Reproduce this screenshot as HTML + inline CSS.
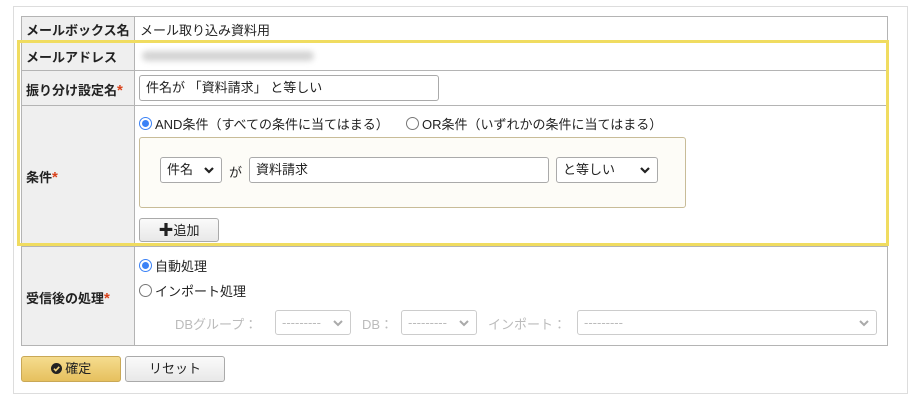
<!DOCTYPE html>
<html><head><meta charset="utf-8"><style>
*{box-sizing:border-box;margin:0;padding:0}
body{width:917px;height:400px;background:#fff;position:relative;font-family:"Liberation Sans","Noto Sans CJK JP",sans-serif;font-size:13px;color:#222;overflow:hidden}
.a{position:absolute}
.line{position:absolute;background:#b4b4b4}
.lbl{position:absolute;left:26px;font-weight:bold;font-size:13px}
.req{color:#d9421b;font-size:15px}
.inp{position:absolute;border:1px solid #aaa;border-radius:3px;background:#fff;padding-left:6px;line-height:23px}
.sel{position:absolute;border:1px solid #aaa;border-radius:3px;background:#fff;padding-left:6px;line-height:23px}
.chev{position:absolute;right:6px;top:8px;width:12px;height:8px}
.radio{position:absolute;width:13px;height:13px;border-radius:50%;border:1px solid #777;background:#fff}
.radio.on{border:1px solid #3b82f6}
.radio.on::after{content:"";position:absolute;left:2px;top:2px;width:7px;height:7px;border-radius:50%;background:#3b82f6}
.dis{color:#bbb}
.btn{position:absolute;border:1px solid #aaa;border-radius:3px;background:linear-gradient(#fafafa,#e8e8e8);text-align:center;line-height:23px}
</style></head><body>
<div class="a" style="left:13px;top:6px;width:895px;height:388px;border:1px solid #ddd"></div>
<div class="a" style="left:21px;top:16px;width:114px;height:330px;background:#efefef"></div>
<div class="a" style="left:21px;top:16px;width:867px;height:330px;border:1px solid #b4b4b4"></div>
<div class="line" style="left:134px;top:16px;width:1px;height:330px"></div>
<div class="line" style="left:21px;top:40px;width:867px;height:1px"></div>
<div class="line" style="left:21px;top:70px;width:867px;height:1px"></div>
<div class="line" style="left:21px;top:105px;width:867px;height:1px"></div>
<div class="line" style="left:21px;top:246px;width:867px;height:1px"></div>

<div class="lbl" style="top:20px">メールボックス名</div>
<div class="a" style="left:140px;top:20px">メール取り込み資料用</div>
<div class="lbl" style="top:47px">メールアドレス</div>
<div class="a" style="left:142px;top:51px;width:172px;height:10px;background:#d4d4d4;border-radius:5px;filter:blur(3px)"></div>
<div class="lbl" style="top:80px">振り分け設定名<span class="req">*</span></div>
<div class="inp" style="left:139px;top:75px;width:300px;height:26px">件名が 「資料請求」 と等しい</div>

<div class="lbl" style="top:167px">条件<span class="req">*</span></div>
<div class="radio on" style="left:139px;top:117px"></div>
<div class="a" style="left:155px;top:114px">AND条件（すべての条件に当てはまる）</div>
<div class="radio" style="left:406px;top:117px"></div>
<div class="a" style="left:422px;top:114px">OR条件（いずれかの条件に当てはまる）</div>
<div class="a" style="left:139px;top:137px;width:547px;height:71px;background:#fdfcf7;border:1px solid #c8bc98;border-radius:3px"></div>
<div class="sel" style="left:160px;top:157px;width:62px;height:26px">件名<svg class="chev" viewBox="0 0 12 8"><path d="M2 2l4 4 4-4" stroke="#222" stroke-width="2.2" fill="none"/></svg></div>
<div class="a" style="left:229px;top:162px">が</div>
<div class="inp" style="left:249px;top:157px;width:300px;height:26px">資料請求</div>
<div class="sel" style="left:556px;top:157px;width:102px;height:26px">と等しい<svg class="chev" viewBox="0 0 12 8"><path d="M2 2l4 4 4-4" stroke="#222" stroke-width="2.2" fill="none"/></svg></div>
<div class="btn" style="left:139px;top:218px;width:80px;height:24px"><b style="font-size:15px">✚</b>追加</div>

<div class="a" style="left:17px;top:40px;width:872px;height:206px;border:3px solid #f0dc60"></div>

<div class="lbl" style="top:288px">受信後の処理<span class="req">*</span></div>
<div class="radio on" style="left:139px;top:259px"></div>
<div class="a" style="left:155px;top:256px">自動処理</div>
<div class="radio" style="left:139px;top:284px"></div>
<div class="a" style="left:155px;top:281px">インポート処理</div>
<div class="a dis" style="left:175px;top:314px">DBグループ：</div>
<div class="sel dis" style="left:275px;top:310px;width:76px;height:25px;border-color:#ccc">---------<svg class="chev" viewBox="0 0 12 8"><path d="M2 2l4 4 4-4" stroke="#aaa" stroke-width="2" fill="none"/></svg></div>
<div class="a dis" style="left:362px;top:314px">DB：</div>
<div class="sel dis" style="left:401px;top:310px;width:76px;height:25px;border-color:#ccc">---------<svg class="chev" viewBox="0 0 12 8"><path d="M2 2l4 4 4-4" stroke="#aaa" stroke-width="2" fill="none"/></svg></div>
<div class="a dis" style="left:488px;top:314px">インポート：</div>
<div class="sel dis" style="left:577px;top:310px;width:300px;height:25px;border-color:#ccc">---------<svg class="chev" viewBox="0 0 12 8"><path d="M2 2l4 4 4-4" stroke="#aaa" stroke-width="2" fill="none"/></svg></div>

<div class="btn" style="left:21px;top:356px;width:100px;height:26px;line-height:24px;background:linear-gradient(#f5dc8e,#e6c05e);border-color:#c9a856"><svg width="11" height="11" viewBox="0 0 12 12" style="vertical-align:-1px"><circle cx="6" cy="6" r="6" fill="#222"/><path d="M3.2 6.2l2 2 3.8-4" stroke="#f0d27a" stroke-width="1.8" fill="none"/></svg> 確定</div>
<div class="btn" style="left:125px;top:356px;width:100px;height:26px;line-height:24px">リセット</div>
</body></html>
